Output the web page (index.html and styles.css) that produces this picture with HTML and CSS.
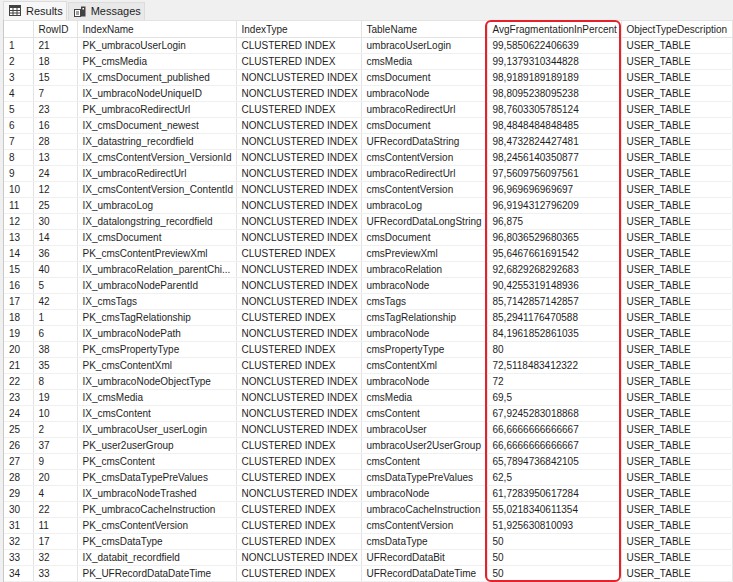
FILE: index.html
```html
<!DOCTYPE html>
<html lang="en">
  <head>
    <meta charset="UTF-8" />
    <title>Results</title>
    <link rel="stylesheet" href="styles.css">
  </head>
  <body>
    <div class="pane">
      <div class="tabs">
        <div class="tab active">
          <svg class="tab-icon" width="12" height="11" viewBox="0 0 12 11">
            <rect x="0.5" y="0.5" width="11" height="10" fill="#fff" stroke="#424242"/>
            <rect x="0.5" y="0.5" width="11" height="2.5" fill="#424242"/>
            <line x1="4" y1="3" x2="4" y2="10.5" stroke="#424242"/>
            <line x1="8" y1="3" x2="8" y2="10.5" stroke="#424242"/>
            <line x1="0.5" y1="5.5" x2="11.5" y2="5.5" stroke="#424242"/>
            <line x1="0.5" y1="8" x2="11.5" y2="8" stroke="#424242"/>
          </svg>
          Results
        </div>
        <div class="tab">
          <svg class="tab-icon" width="12" height="11" viewBox="0 0 12 11">
            <rect x="0.5" y="3.5" width="6" height="7" fill="#fff" stroke="#424242"/>
            <line x1="2" y1="6" x2="5" y2="6" stroke="#424242"/>
            <line x1="2" y1="8" x2="5" y2="8" stroke="#424242"/>
            <rect x="7" y="0.5" width="4.5" height="10" fill="#424242"/>
            <rect x="8.5" y="2" width="1.5" height="1.5" fill="#fff"/>
          </svg>
          Messages
        </div>
      </div>

      <div class="grid-wrap">
        <table class="grid">
          <colgroup>
            <col class="c-num">
            <col class="c-id">
            <col class="c-name">
            <col class="c-type">
            <col class="c-table">
            <col class="c-frag">
            <col class="c-desc">
          </colgroup>
          <thead>
            <tr>
              <th></th>
              <th>RowID</th>
              <th>IndexName</th>
              <th>IndexType</th>
              <th>TableName</th>
              <th>AvgFragmentationInPercent</th>
              <th>ObjectTypeDescription</th>
            </tr>
          </thead>
          <tbody id="rows"></tbody>
        </table>
        <div class="highlight"></div>
      </div>
    </div>

    <script>
      const rows = [
        [21, "PK_umbracoUserLogin", "CLUSTERED INDEX", "umbracoUserLogin", "99,5850622406639"],
        [18, "PK_cmsMedia", "CLUSTERED INDEX", "cmsMedia", "99,1379310344828"],
        [15, "IX_cmsDocument_published", "NONCLUSTERED INDEX", "cmsDocument", "98,9189189189189"],
        [7, "IX_umbracoNodeUniqueID", "NONCLUSTERED INDEX", "umbracoNode", "98,8095238095238"],
        [23, "PK_umbracoRedirectUrl", "CLUSTERED INDEX", "umbracoRedirectUrl", "98,7603305785124"],
        [16, "IX_cmsDocument_newest", "NONCLUSTERED INDEX", "cmsDocument", "98,4848484848485"],
        [28, "IX_datastring_recordfield", "NONCLUSTERED INDEX", "UFRecordDataString", "98,4732824427481"],
        [13, "IX_cmsContentVersion_VersionId", "NONCLUSTERED INDEX", "cmsContentVersion", "98,2456140350877"],
        [24, "IX_umbracoRedirectUrl", "NONCLUSTERED INDEX", "umbracoRedirectUrl", "97,5609756097561"],
        [12, "IX_cmsContentVersion_ContentId", "NONCLUSTERED INDEX", "cmsContentVersion", "96,969696969697"],
        [25, "IX_umbracoLog", "NONCLUSTERED INDEX", "umbracoLog", "96,9194312796209"],
        [30, "IX_datalongstring_recordfield", "NONCLUSTERED INDEX", "UFRecordDataLongString", "96,875"],
        [14, "IX_cmsDocument", "NONCLUSTERED INDEX", "cmsDocument", "96,8036529680365"],
        [36, "PK_cmsContentPreviewXml", "CLUSTERED INDEX", "cmsPreviewXml", "95,6467661691542"],
        [40, "IX_umbracoRelation_parentChi...", "NONCLUSTERED INDEX", "umbracoRelation", "92,6829268292683"],
        [5, "IX_umbracoNodeParentId", "NONCLUSTERED INDEX", "umbracoNode", "90,4255319148936"],
        [42, "IX_cmsTags", "NONCLUSTERED INDEX", "cmsTags", "85,7142857142857"],
        [1, "PK_cmsTagRelationship", "CLUSTERED INDEX", "cmsTagRelationship", "85,2941176470588"],
        [6, "IX_umbracoNodePath", "NONCLUSTERED INDEX", "umbracoNode", "84,1961852861035"],
        [38, "PK_cmsPropertyType", "CLUSTERED INDEX", "cmsPropertyType", "80"],
        [35, "PK_cmsContentXml", "CLUSTERED INDEX", "cmsContentXml", "72,5118483412322"],
        [8, "IX_umbracoNodeObjectType", "NONCLUSTERED INDEX", "umbracoNode", "72"],
        [19, "IX_cmsMedia", "NONCLUSTERED INDEX", "cmsMedia", "69,5"],
        [10, "IX_cmsContent", "NONCLUSTERED INDEX", "cmsContent", "67,9245283018868"],
        [2, "IX_umbracoUser_userLogin", "NONCLUSTERED INDEX", "umbracoUser", "66,6666666666667"],
        [37, "PK_user2userGroup", "CLUSTERED INDEX", "umbracoUser2UserGroup", "66,6666666666667"],
        [9, "PK_cmsContent", "CLUSTERED INDEX", "cmsContent", "65,7894736842105"],
        [20, "PK_cmsDataTypePreValues", "CLUSTERED INDEX", "cmsDataTypePreValues", "62,5"],
        [4, "IX_umbracoNodeTrashed", "NONCLUSTERED INDEX", "umbracoNode", "61,7283950617284"],
        [22, "PK_umbracoCacheInstruction", "CLUSTERED INDEX", "umbracoCacheInstruction", "55,0218340611354"],
        [11, "PK_cmsContentVersion", "CLUSTERED INDEX", "cmsContentVersion", "51,925630810093"],
        [17, "PK_cmsDataType", "CLUSTERED INDEX", "cmsDataType", "50"],
        [32, "IX_databit_recordfield", "NONCLUSTERED INDEX", "UFRecordDataBit", "50"],
        [33, "PK_UFRecordDataDateTime", "CLUSTERED INDEX", "UFRecordDataDateTime", "50"]
      ];

      const tbody = document.getElementById("rows");
      rows.forEach((r, i) => {
        const tr = document.createElement("tr");
        const cells = [i + 1, ...r, "USER_TABLE"];
        cells.forEach((value) => {
          const td = document.createElement("td");
          td.textContent = value;
          tr.appendChild(td);
        });
        tbody.appendChild(tr);
      });
    </script>
  </body>
</html>
```

FILE: styles.css
```css
body {
  margin: 0;
  background: #ffffff;
  font-family: "Liberation Sans", Arial, sans-serif;
  font-size: 10px;
  color: #1e1e1e;
  overflow: hidden;
}

.pane {
  padding-left: 3px;
  background: #f0f0f0;
}

.tabs {
  display: flex;
  align-items: flex-end;
  height: 20px;
  background: #f0f0f0;
}

.tab {
  display: flex;
  align-items: center;
  gap: 5px;
  height: 16px;
  padding: 0 3px 1px 5px;
  font-size: 11px;
  color: #1e1e1e;
  border: 1px solid #dcdcdc;
  border-bottom: none;
  background: #e9e9e9;
}

.tab.active {
  height: 17px;
  background: #f7f7f7;
  margin-right: 1px;
}

.tab-icon {
  flex: none;
}

.grid-wrap {
  position: relative;
  background: #ffffff;
  border-left: 1px solid #c8c8c8;
  height: 562px;
}

.grid {
  border-collapse: collapse;
  table-layout: fixed;
  width: 728px;
}

.c-num { width: 29px; }
.c-id { width: 44px; }
.c-name { width: 159px; }
.c-type { width: 125px; }
.c-table { width: 126px; }
.c-frag { width: 134px; }
.c-desc { width: 111px; }

.grid th,
.grid td {
  height: 15px;
  padding: 0 0 0 5px;
  text-align: left;
  white-space: nowrap;
  overflow: hidden;
  border-right: 1px solid #e3e3e3;
  border-bottom: 1px solid #f0f0f0;
  line-height: 15px;
}

.grid th {
  height: 16px;
  font-weight: normal;
  border-top: 1px solid #e3e3e3;
  border-bottom: 1px solid #e3e3e3;
}

.highlight {
  position: absolute;
  left: 481px;
  top: 0;
  width: 132px;
  height: 558px;
  border: 2px solid #e8202a;
  border-radius: 6px;
  pointer-events: none;
}
```
